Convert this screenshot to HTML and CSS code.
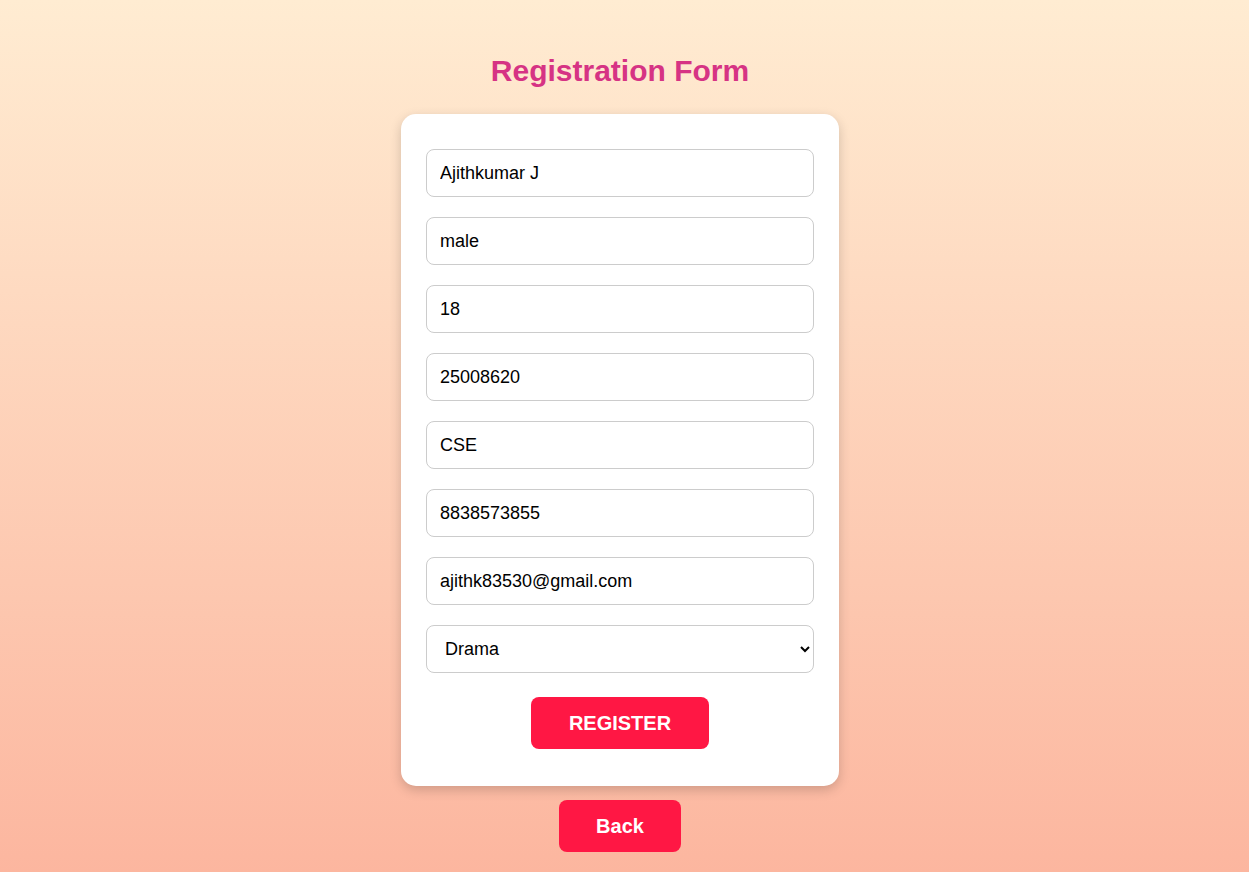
FILE: index.html
```html
<!DOCTYPE html>
<html lang="en">
<head>
<meta charset="utf-8">
<title>Registration Form</title>
<link rel="stylesheet" href="styles.css">
</head>
<body>
<main class="page">
  <h1 class="title">Registration Form</h1>
  <form class="card">
    <input class="field" type="text" value="Ajithkumar J">
    <input class="field" type="text" value="male">
    <input class="field" type="text" value="18">
    <input class="field" type="text" value="25008620">
    <input class="field" type="text" value="CSE">
    <input class="field" type="text" value="8838573855">
    <input class="field" type="text" value="ajithk83530@gmail.com">
    <select class="field select">
      <option>Drama</option>
    </select>
    <button class="btn register" type="button">REGISTER</button>
  </form>
  <button class="btn back" type="button">Back</button>
</main>
</body>
</html>
```

FILE: styles.css
```css
html, body {
  margin: 0;
  padding: 0;
}
body {
  min-height: 872px;
  background: linear-gradient(to bottom, #ffecd2 0%, #fcb69f 100%);
  font-family: "Liberation Sans", Arial, sans-serif;
}
.page {
  display: flex;
  flex-direction: column;
  align-items: center;
  padding-top: 54px;
  padding-right: 9px;
}
.title {
  margin: 0 0 26px;
  font-size: 30px;
  line-height: 34px;
  font-weight: bold;
  color: #d63384;
}
.card {
  box-sizing: border-box;
  width: 438px;
  background: #fff;
  border-radius: 15px;
  padding: 35px 25px 37px;
  box-shadow: 0 4px 12px rgba(0, 0, 0, 0.18);
  display: flex;
  flex-direction: column;
  align-items: center;
  gap: 20px;
}
.field {
  box-sizing: border-box;
  width: 100%;
  height: 48px;
  margin: 0;
  padding: 0 13px;
  border: 1px solid #ccc;
  border-radius: 8px;
  background: #fff;
  font-family: "Liberation Sans", Arial, sans-serif;
  font-size: 18px;
  color: #000;
  outline: none;
}
.select {
  padding: 0 8px 0 14px;
}
.btn {
  border: none;
  border-radius: 8px;
  background: #ff1744;
  color: #fff;
  font-family: "Liberation Sans", Arial, sans-serif;
  font-weight: bold;
  font-size: 20px;
  line-height: 24px;
  padding: 14px 38px;
  cursor: pointer;
}
.register {
  margin-top: 4px;
}
.back {
  margin-top: 14px;
  padding: 14px 37px;
}
```
